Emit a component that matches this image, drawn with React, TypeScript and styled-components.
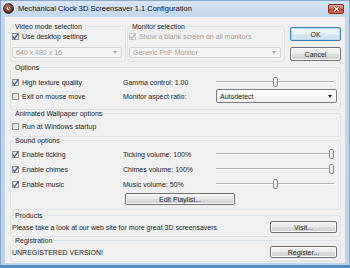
import * as React from "react";
import styled, { createGlobalStyle } from "styled-components";

const GlobalStyle = createGlobalStyle`
  html, body { margin: 0; padding: 0; background: #ffffff; }
  body {
    font-family: "Liberation Sans", Arial, sans-serif;
    font-size: 7px;
    color: #1c1c1c;
  }
  * { box-sizing: border-box; }
`;

const Window = styled.div`
  width: 350px;
  height: 268px;
  display: flex;
  flex-direction: column;
  background: linear-gradient(#d9e7f6, #c3d8ef 16px, #bcd2eb);
  box-shadow: inset 0 -3px 0 #4f90c4, inset 0 0 0 1px #86a8cb;
  overflow: hidden;
`;

const TitleBar = styled.div`
  height: 17px;
  flex: none;
  display: flex;
  align-items: center;
  gap: 4px;
  padding: 0 6px 0 3px;
`;

const Title = styled.div`
  flex: 1;
  font-size: 7.5px;
  color: #101010;
  white-space: nowrap;
`;

const CloseBtn = styled.div`
  width: 16px;
  height: 10px;
  border: 1px solid #8b2b1e;
  border-radius: 2px;
  background: linear-gradient(#e9a99a, #d2634f 50%, #c0412c 51%, #d56a52);
  display: flex;
  align-items: center;
  justify-content: center;
`;

const Client = styled.div`
  height: 246px;
  margin: 0 5px;
  background: #f0f0f0;
  padding: 6px 4px 0 5px;
  display: flex;
  flex-direction: column;
`;

const TopRow = styled.div`
  display: flex;
  align-items: flex-start;
`;

const Group = styled.fieldset<{ $mt?: number; $w?: number; $ml?: number }>`
  margin: ${(p) => p.$mt ?? 0}px 0 0 ${(p) => p.$ml ?? 0}px;
  padding: 0 3px 0 1px;
  border: 1px solid #dbe2e7;
  border-radius: 3px;
  min-width: 0;
  width: ${(p) => (p.$w ? `${p.$w}px` : "auto")};
  flex: none;
`;

const Legend = styled.legend`
  margin-left: 2px;
  padding: 0 1px;
  height: 7px;
  line-height: 7px;
  font-size: 7px;
  color: #1c1c1c;
`;

const Stack = styled.div<{ $pt: number; $pb: number; $gap?: number }>`
  display: flex;
  flex-direction: column;
  gap: ${(p) => p.$gap ?? 0}px;
  padding: ${(p) => p.$pt}px 0 ${(p) => p.$pb}px;
`;

const Grid = styled.div<{ $rows: string; $pt: number; $pb: number; $gap: number }>`
  display: grid;
  grid-template-columns: 111px 92px 1fr;
  grid-template-rows: ${(p) => p.$rows};
  row-gap: ${(p) => p.$gap}px;
  align-items: center;
  padding: ${(p) => p.$pt}px 0 ${(p) => p.$pb}px;
`;

const CheckRow = styled.label<{ $disabled?: boolean }>`
  display: flex;
  align-items: center;
  gap: 3px;
  height: 12px;
  white-space: nowrap;
  color: ${(p) => (p.$disabled ? "#a0a0a0" : "#1c1c1c")};
`;

const Box = styled.span<{ $disabled?: boolean }>`
  width: 7px;
  height: 7px;
  flex: none;
  border: 1px solid ${(p) => (p.$disabled ? "#c9c9c9" : "#8e8f8f")};
  background: ${(p) =>
    p.$disabled ? "#f4f4f4" : "linear-gradient(135deg, #dcdcdc, #fbfbfb)"};
  display: flex;
  align-items: center;
  justify-content: center;
  overflow: visible;
`;

const Text = styled.span`
  white-space: nowrap;
`;

const Combo = styled.div<{ $disabled?: boolean; $h: number; $mt?: number }>`
  height: ${(p) => p.$h}px;
  margin-top: ${(p) => p.$mt ?? 0}px;
  display: flex;
  align-items: center;
  justify-content: space-between;
  padding: 0 4px 0 3px;
  border: 1px solid ${(p) => (p.$disabled ? "#d2d2d2" : "#7a7a7a")};
  border-radius: 2px;
  background: ${(p) =>
    p.$disabled ? "#f3f3f3" : "linear-gradient(#fdfdfd, #f1f1f1)"};
  color: ${(p) => (p.$disabled ? "#a3a3a3" : "#1c1c1c")};
  white-space: nowrap;
`;

const Arrow = styled.span<{ $disabled?: boolean }>`
  width: 0;
  height: 0;
  border-left: 2.5px solid transparent;
  border-right: 2.5px solid transparent;
  border-top: 3px solid ${(p) => (p.$disabled ? "#a8a8a8" : "#1c1c1c")};
`;

const ButtonCol = styled.div`
  display: flex;
  flex-direction: column;
  gap: 6px;
  padding-top: 4px;
  margin-left: 5px;
  width: 51px;
`;

const Button = styled.button<{ $w: number; $h: number; $default?: boolean }>`
  width: ${(p) => p.$w}px;
  height: ${(p) => p.$h}px;
  padding: 0;
  font-family: inherit;
  font-size: 7px;
  color: #1c1c1c;
  border: 1px solid ${(p) => (p.$default ? "#3c7fb1" : "#707070")};
  border-radius: 2px;
  background: ${(p) =>
    p.$default
      ? "linear-gradient(#f4f9fd, #e6f1fa 50%, #d6e8f6 51%, #cde2f3)"
      : "linear-gradient(#f2f2f2, #ebebeb 50%, #dddddd 51%, #cfcfcf)"};
  box-shadow: inset 0 0 0 1px ${(p) => (p.$default ? "#b6dcf3" : "#fbfbfb")};
`;

const SliderBox = styled.div`
  position: relative;
  height: 12px;
  margin: 0 3px 0 1px;
`;

const Track = styled.div`
  position: absolute;
  left: 0;
  right: 0;
  top: 5px;
  height: 2px;
  border-top: 1px solid #b0b0b0;
  border-bottom: 1px solid #ffffff;
`;

const Thumb = styled.div`
  position: absolute;
  top: 1px;
  width: 5px;
  height: 10px;
  border: 1px solid #8a8a8a;
  border-radius: 2px;
  background: linear-gradient(90deg, #fdfdfd, #e3e3e3);
`;

const PlainRow = styled.div`
  display: flex;
  align-items: center;
  justify-content: space-between;
  height: 12px;
`;

const Check = ({ on = true, disabled = false }: { on?: boolean; disabled?: boolean }) => (
  <Box $disabled={disabled}>
    {on && (
      <svg width="7" height="7" viewBox="0 0 7 7" style={{ overflow: "visible" }}>
        <path
          d="M0.8 3.6 L2.6 5.6 L6.2 0.6"
          fill="none"
          stroke={disabled ? "#b5b5b5" : "#3f5ca5"}
          strokeWidth="1.3"
        />
      </svg>
    )}
  </Box>
);

const CheckItem = ({
  label,
  on = true,
  disabled = false,
}: {
  label: string;
  on?: boolean;
  disabled?: boolean;
}) => (
  <CheckRow $disabled={disabled}>
    <Check on={on} disabled={disabled} />
    <Text>{label}</Text>
  </CheckRow>
);

const Slider = ({ value }: { value: number }) => (
  <SliderBox>
    <Track />
    <Thumb style={{ left: `calc(${value} * (100% - 5px))` }} />
  </SliderBox>
);

const AppIcon = () => (
  <svg width="11" height="11" viewBox="0 0 11 11">
    <defs>
      <radialGradient id="ic" cx="40%" cy="35%" r="70%">
        <stop offset="0" stopColor="#c98a72" />
        <stop offset="0.6" stopColor="#7a3426" />
        <stop offset="1" stopColor="#3b140c" />
      </radialGradient>
    </defs>
    <circle cx="5.5" cy="5.5" r="5" fill="url(#ic)" stroke="#2e1109" strokeWidth="0.6" />
    <circle cx="5.5" cy="5.5" r="2.4" fill="#e2c4b3" stroke="#5a2418" strokeWidth="0.5" />
    <path d="M5.5 5.5 L5.5 3.6 M5.5 5.5 L6.9 6.2" stroke="#3b140c" strokeWidth="0.6" />
  </svg>
);

const App = () => {
  return (
    <>
      <GlobalStyle />
      <Window>
        <TitleBar>
          <AppIcon />
          <Title>Mechanical Clock 3D Screensaver 1.1 Configuration</Title>
          <CloseBtn>
            <svg width="7" height="6" viewBox="0 0 7 6">
              <path d="M1 0.8 L6 5.2 M6 0.8 L1 5.2" stroke="#5a1a10" strokeWidth="2.2" />
              <path d="M1 0.8 L6 5.2 M6 0.8 L1 5.2" stroke="#ffffff" strokeWidth="1.2" />
            </svg>
          </CloseBtn>
        </TitleBar>
        <Client>
          <TopRow>
            <Group $w={116}>
              <Legend>Video mode selection</Legend>
              <Stack $pt={0} $pb={3}>
                <CheckItem label="Use desktop settings" />
                <Combo $disabled $h={11} $mt={5}>
                  <Text>640 x 480 x 16</Text>
                  <Arrow $disabled />
                </Combo>
              </Stack>
            </Group>
            <Group $w={158} $ml={1}>
              <Legend>Monitor selection</Legend>
              <Stack $pt={0} $pb={3}>
                <CheckItem label="Show a blank screen on all monitors" disabled />
                <Combo $disabled $h={11} $mt={5}>
                  <Text>Generic PnP Monitor</Text>
                  <Arrow $disabled />
                </Combo>
              </Stack>
            </Group>
            <ButtonCol>
              <Button $w={51} $h={14} $default>
                OK
              </Button>
              <Button $w={51} $h={14}>
                Cancel
              </Button>
            </ButtonCol>
          </TopRow>

          <Group $mt={2}>
            <Legend>Options</Legend>
            <Grid $rows="12px 14px" $pt={5} $pb={6} $gap={1}>
              <CheckItem label="High texture quality" />
              <Text>Gamma control: 1.00</Text>
              <Slider value={0.5} />
              <CheckItem label="Exit on mouse move" on={false} />
              <Text>Monitor aspect ratio:</Text>
              <Combo $h={14} style={{ marginLeft: 1 }}>
                <Text>Autodetect</Text>
                <Arrow />
              </Combo>
            </Grid>
          </Group>

          <Group>
            <Legend>Animated Wallpaper options</Legend>
            <Stack $pt={3} $pb={4}>
              <CheckItem label="Run at Windows startup" on={false} />
            </Stack>
          </Group>

          <Group>
            <Legend>Sound options</Legend>
            <Grid $rows="12px 12px 12px 12px" $pt={4} $pb={4} $gap={3}>
              <CheckItem label="Enable ticking" />
              <Text>Ticking volume: 100%</Text>
              <Slider value={1} />
              <CheckItem label="Enable chimes" />
              <Text>Chimes volume: 100%</Text>
              <Slider value={1} />
              <CheckItem label="Enable music" />
              <Text>Music volume: 50%</Text>
              <Slider value={0.5} />
              <span />
              <Button
                $w={110}
                $h={12}
                style={{ gridColumn: "2 / 4", marginLeft: 2 }}
              >
                Edit Playlist...
              </Button>
            </Grid>
          </Group>

          <Group $mt={2}>
            <Legend>Products</Legend>
            <Stack $pt={2} $pb={3}>
              <PlainRow>
                <Text>Please take a look at our web site for more great 3D screensavers</Text>
                <Button $w={67} $h={12}>
                  Visit...
                </Button>
              </PlainRow>
            </Stack>
          </Group>

          <Group>
            <Legend>Registration</Legend>
            <Stack $pt={2} $pb={3}>
              <PlainRow>
                <Text>UNREGISTERED VERSION!</Text>
                <Button $w={67} $h={12}>
                  Register...
                </Button>
              </PlainRow>
            </Stack>
          </Group>
        </Client>
      </Window>
    </>
  );
};

export default App;
